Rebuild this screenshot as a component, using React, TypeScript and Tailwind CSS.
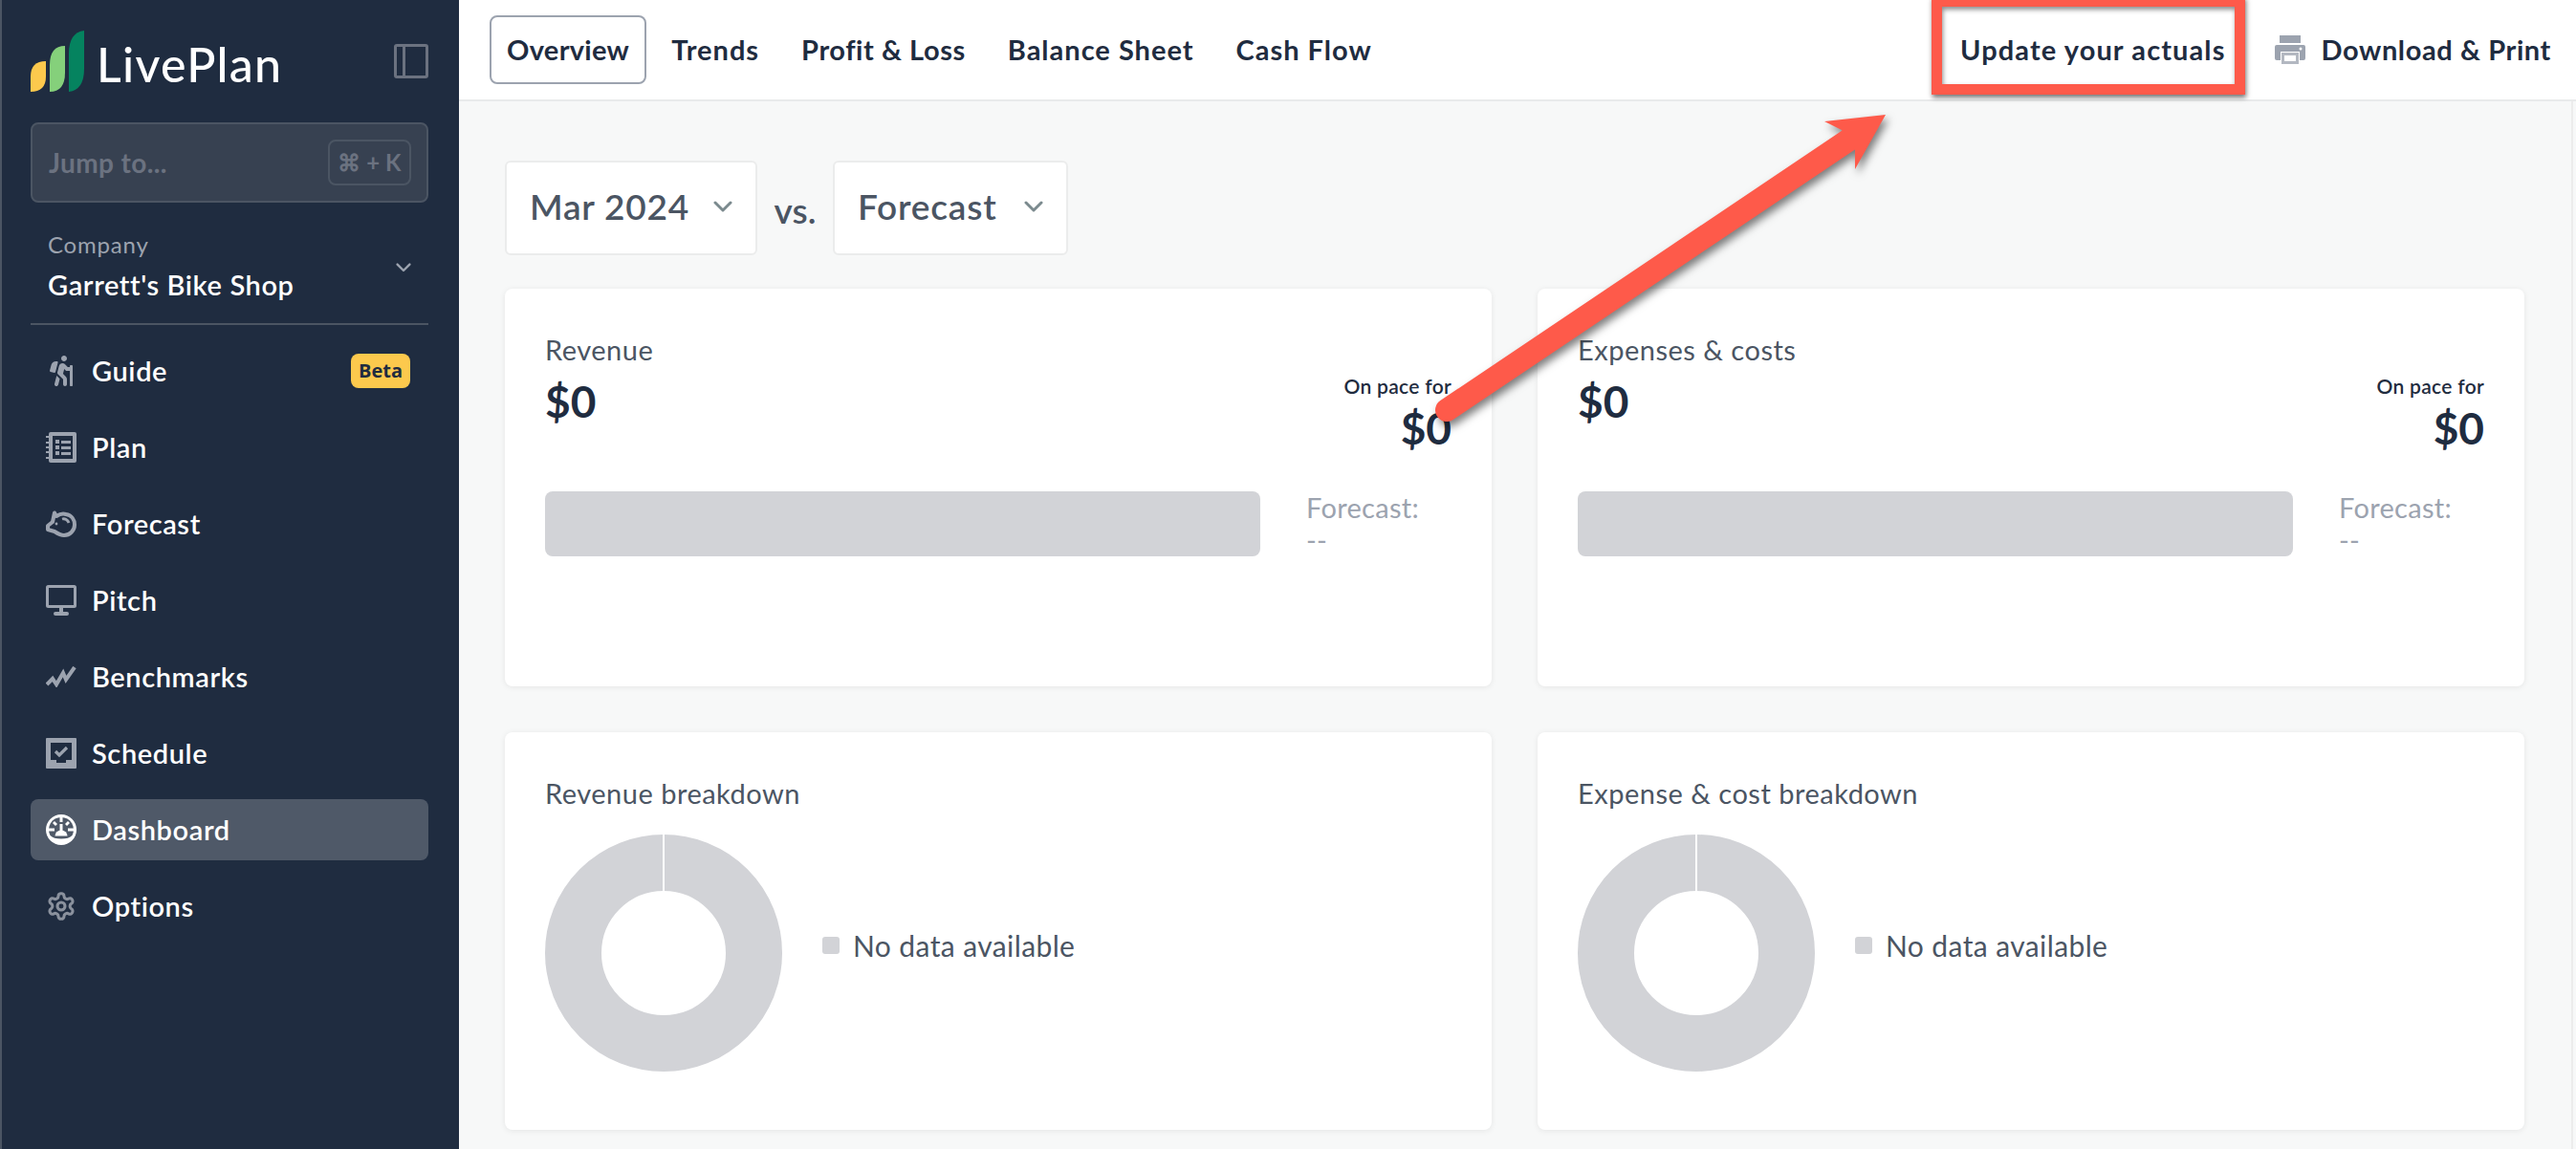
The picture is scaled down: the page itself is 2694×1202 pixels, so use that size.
import React from "react";
import { FaHiking } from "react-icons/fa";

const Logo = () => (
  <svg width="56" height="64" viewBox="32 32 56 64" className="shrink-0">
    <path d="M32 96V80Q32 64 48 64V80Q48 96 32 96Z" fill="#fcc94d" />
    <path d="M52 96V68Q52 48 68 48V76Q68 96 52 96Z" fill="#85d07b" />
    <path d="M72 96V56Q72 34 88 32V72Q88 94 72 96Z" fill="#05835f" />
  </svg>
);

const c = "#9ca3af";
const Printer = () => (
  <svg width="32" height="30" viewBox="0 0 32 30" className="shrink-0">
    <path d="M5 0h22v8H5z" fill={c} />
    <path d="M2 10h28a2 2 0 0 1 2 2v12a2 2 0 0 1-2 2h-4v-9H6v9H2a2 2 0 0 1-2-2V12a2 2 0 0 1 2-2z" fill={c} />
    <path d="M7 18h18v12H7zM10 21v6h12v-6z" fill="#b3b8c1" fillRule="evenodd" />
    <circle cx="27" cy="14" r="1.500" fill="#fff" />
  </svg>
);
const Notebook = () => (
  <svg width="32" height="32" viewBox="0 0 32 32" fill="none">
    <rect x="3" y="0" width="29" height="32" rx="2" fill={c} />
    <rect x="7" y="4" width="21" height="24" fill="#1f2c40" />
    <path d="M0 4h4v2H0zM0 10h4v2H0zM0 15h4v2H0zM0 20h4v2H0zM0 26h4v2H0z" fill={c} />
    <path d="M10 8h4v4h-4zM10 14h4v4h-4zM10 20h4v4h-4zM16 9h10v3H16zM16 15h10v3H16zM16 21h10v3H16z" fill={c} />
  </svg>
);
const Pig = () => (
  <svg width="32" height="28" viewBox="0 0 32 28" fill="none" stroke={c} strokeWidth="4" strokeLinejoin="round">
    <path d="M9 2.500l2 3.500c3-2 7-3 10-2 6 1 9 6 9 11 0 6-5 11-11 11-4 0-7-2-10-4l-7-2v-4l5-4z" />
    <path d="M17 9c3-1 6 1 7 4" strokeWidth="2.800" />
    <circle cx="11" cy="14" r="1.400" fill={c} stroke="none" />
  </svg>
);
const Monitor = () => (
  <svg width="32" height="32" viewBox="0 0 32 32" fill="none">
    <rect x="1.500" y="1.500" width="29" height="21" rx="1" stroke={c} strokeWidth="3" />
    <path d="M14 23h4v5h-4z" fill={c} />
    <rect x="8" y="28" width="16" height="4" rx="2" fill={c} />
  </svg>
);
const Zigzag = () => (
  <svg width="32" height="22" viewBox="0 0 32 22" fill="none" stroke={c} strokeWidth="4" strokeLinejoin="miter">
    <path d="M1 19l6-6 4 6 7-12 3 7 9-13" />
  </svg>
);
const Inbox = () => (
  <svg width="32" height="32" viewBox="0 0 32 32" fill="none">
    <path fillRule="evenodd" clipRule="evenodd" d="M1 0h30a1 1 0 0 1 1 1v30a1 1 0 0 1-1 1H1a1 1 0 0 1-1-1V1a1 1 0 0 1 1-1zM5 5v18h6v3h10v-3h6V5z" fill={c} />
    <path d="M10 14l4 4 8-8" stroke={c} strokeWidth="3.200" fill="none" />
  </svg>
);
const Gauge = () => (
  <svg width="32" height="32" viewBox="0 0 32 32">
    <circle cx="16" cy="16" r="16" fill="#fff" />
    <path d="M4.500 22A13 13 0 1 1 27.500 22Q24 25.500 16 25.500T4.500 22Z" fill="#4f5968" />
    <path d="M14.500 3h3v5h-3zM3 14.500h6v3H3zM23 14.500h6v3h-6zM7 9l2-2 3 3-2 2zM25 9l-2-2-3 3 2 2z" fill="#fff" />
    <path d="M14.500 10h3v7h-3z" fill="#fff" />
    <path d="M9.500 22.500a6.500 6 0 0 1 13 0z" fill="#fff" />
  </svg>
);
const Gear = () => (
  <svg width="32" height="32" viewBox="0 0 24 24" fill="none" stroke="#8a919d" strokeWidth="2.300" strokeLinecap="round" strokeLinejoin="round">
    <path d="M12.220 2h-.440a2 2 0 0 0-2 2v.180a2 2 0 0 1-1 1.730l-.430.250a2 2 0 0 1-2 0l-.150-.080a2 2 0 0 0-2.730.730l-.220.380a2 2 0 0 0 .730 2.730l.150.100a2 2 0 0 1 1 1.720v.510a2 2 0 0 1-1 1.740l-.150.090a2 2 0 0 0-.730 2.730l.220.380a2 2 0 0 0 2.730.730l.150-.080a2 2 0 0 1 2 0l.430.250a2 2 0 0 1 1 1.730V20a2 2 0 0 0 2 2h.440a2 2 0 0 0 2-2v-.180a2 2 0 0 1 1-1.730l.430-.250a2 2 0 0 1 2 0l.150.080a2 2 0 0 0 2.730-.730l.220-.390a2 2 0 0 0-.730-2.730l-.150-.080a2 2 0 0 1-1-1.740v-.500a2 2 0 0 1 1-1.740l.150-.090a2 2 0 0 0 .730-2.730l-.220-.380a2 2 0 0 0-2.730-.730l-.150.080a2 2 0 0 1-2 0l-.430-.250a2 2 0 0 1-1-1.730V4a2 2 0 0 0-2-2z" />
    <circle cx="12" cy="12" r="3" />
  </svg>
);
const Chevron = ({ w, color, sw }: { w: number; color: string; sw: number }) => (
  <svg width={w} height={w * 0.6} viewBox="0 0 20 12" fill="none" stroke={color} strokeWidth={sw} strokeLinecap="round" strokeLinejoin="round">
    <path d="M2 2l8 8 8-8" />
  </svg>
);

const nav: { label: string; icon: React.ReactNode; active?: boolean; badge?: boolean }[] = [
  { label: "Guide", icon: <FaHiking size={32} color="#9ca3af" />, badge: true },
  { label: "Plan", icon: <Notebook /> },
  { label: "Forecast", icon: <Pig /> },
  { label: "Pitch", icon: <Monitor /> },
  { label: "Benchmarks", icon: <Zigzag /> },
  { label: "Schedule", icon: <Inbox /> },
  { label: "Dashboard", icon: <Gauge />, active: true },
  { label: "Options", icon: <Gear /> },
];

const Sidebar = () => (
  <aside className="w-[480px] shrink-0 h-full bg-[#1f2c40] border-l-2 border-[#4b5563] pl-[30px] pr-[32px] pt-[32px] flex flex-col">
    <div className="h-[64px] flex items-center justify-between">
      <div className="flex items-center gap-[13px]">
        <Logo />
        <span className="text-[50px] leading-none font-medium text-white tracking-[1.3px] pt-[6px]">LivePlan</span>
      </div>
      <div className="w-[36px] h-[36px] border-[3px] border-[#6b7280] rounded-[3px] flex -mt-[1px]">
        <div className="w-[9px] border-r-[3px] border-[#6b7280]" />
      </div>
    </div>
    <div className="mt-[32px] h-[84px] bg-[#374151] border-2 border-[#4b5563] rounded-[8px] pl-[17px] pr-[16px] flex items-center justify-between">
      <span className="text-[28px] font-bold text-[#6b7280] tracking-[0.4px]">Jump to...</span>
      <span className="w-[87px] h-[48px] border-2 border-[#4b5563] rounded-[8px] flex items-center justify-center text-[24px] font-bold text-[#6b7280] whitespace-pre">⌘ + K</span>
    </div>
    <div className="mt-[28px] h-[100px] border-b-2 border-[#4b5563] pl-[18px] pr-[18px] flex items-start justify-between">
      <div className="flex flex-col">
        <span className="text-[24px] leading-[32px] text-[#9ca3af] tracking-[0.8px]">Company</span>
        <span className="text-[29px] leading-[36px] mt-[8px] font-semibold text-white tracking-[0.6px]">Garrett's Bike Shop</span>
      </div>
      <div className="mt-[35px]"><Chevron w={16} color="#9ca3af" sw={3} /></div>
    </div>
    <nav className="mt-[16px] flex flex-col gap-[16px]">
      {nav.map((n) => (
        <div key={n.label} className={`h-[64px] rounded-[8px] pl-[16px] pr-[19px] flex items-center ${n.active ? "bg-[#4f5968]" : ""}`}>
          <span className="w-[32px] h-[32px] flex items-center justify-center shrink-0">{n.icon}</span>
          <span className="ml-[16px] text-[29px] font-semibold text-white tracking-[0.6px]">{n.label}</span>
          {n.badge && (
            <span className="ml-auto w-[62px] h-[36px] rounded-[8px] bg-[#fcc94d] flex items-center justify-center text-[20px] font-bold text-[#1f2c40] font-['Open_Sans',sans-serif]">Beta</span>
          )}
        </div>
      ))}
    </nav>
  </aside>
);

const tabCls = "text-[29px] font-bold text-[#1f2c40] whitespace-nowrap";

const TopBar = () => (
  <header className="h-[106px] shrink-0 bg-white border-b-2 border-[#e9eaeb] pl-[32px] pr-[26px] flex items-center">
    <div className="flex items-center gap-[8px]">
      <span className={`${tabCls} tracking-[0.3px] h-[72px] flex items-center px-[16px] border-2 border-[#9ca3af] rounded-[8px]`}>Overview</span>
      <span className={`${tabCls} tracking-[1px] px-[18px]`}>Trends</span>
      <span className={`${tabCls} tracking-[0.55px] px-[18px]`}>Profit &amp; Loss</span>
      <span className={`${tabCls} tracking-[1px] px-[18px]`}>Balance Sheet</span>
      <span className={`${tabCls} tracking-[1px] px-[18px]`}>Cash Flow</span>
    </div>
    <div className="ml-auto flex items-center">
      <span className={`${tabCls} tracking-[1.1px]`}>Update your actuals</span>
      <span className="ml-[51px] flex items-center gap-[17px]">
        <Printer />
        <span className={`${tabCls} tracking-[0.6px]`}>Download &amp; Print</span>
      </span>
    </div>
  </header>
);

const Select = ({ label, width }: { label: string; width: string }) => (
  <div className={`${width} h-[99px] bg-white border-2 border-[#ebecec] rounded-[6px] pl-[24px] pr-[24px] flex items-center justify-between pb-[4px]`}>
    <span className="text-[37px] font-semibold text-[#4b5563] tracking-[0.8px]">{label}</span>
    <Chevron w={20} color="#7b8a8e" sw={3} />
  </div>
);

const cardCls = "h-[416px] bg-white rounded-[8px] shadow-[0_1px_6px_rgba(0,0,0,0.08)] pt-[48px] px-[42px]";

const StatCard = ({ title }: { title: string }) => (
  <div className={cardCls}>
    <div className="h-[126px] flex justify-between">
      <div>
        <div className="text-[29px] leading-[32px] text-[#4b5563] tracking-[0.5px]">{title}</div>
        <div className="text-[46px] leading-[56px] mt-[10px] font-bold text-[#1f2c40]">$0</div>
      </div>
      <div className="pt-[40px] text-right">
        <div className="text-[21px] leading-[28px] font-semibold text-[#1f2c40] tracking-[0.3px]">On pace for</div>
        <div className="text-[46px] leading-[56px] mt-[2px] font-bold text-[#1f2c40]">$0</div>
      </div>
    </div>
    <div className="mt-[38px] flex gap-[48px]">
      <div className="w-[748px] h-[68px] bg-[#d2d3d7] rounded-[8px]" />
      <div className="text-[29px] leading-[34px] text-[#9ca3af] tracking-[0.3px]">
        <div>Forecast:</div>
        <div>--</div>
      </div>
    </div>
  </div>
);

const Donut = () => (
  <svg width="248" height="248" viewBox="0 0 248 248" className="shrink-0">
    <circle cx="124" cy="124" r="94.500" fill="none" stroke="#d2d3d7" strokeWidth="59" />
    <rect x="123" y="0" width="2" height="60" fill="#fff" />
  </svg>
);

const ChartCard = ({ title }: { title: string }) => (
  <div className={cardCls}>
    <div className="text-[29px] leading-[32px] text-[#4b5563] tracking-[0.5px]">{title}</div>
    <div className="mt-[27px] flex items-center gap-[42px]">
      <Donut />
      <div className="flex items-center gap-[14px] mb-[16px]">
        <span className="w-[18px] h-[18px] rounded-[3px] bg-[#d2d3d7]" />
        <span className="text-[30px] text-[#4b5563] tracking-[0.4px]">No data available</span>
      </div>
    </div>
  </div>
);

export default function App() {
  return (
    <div className="relative w-[2694px] h-[1202px] overflow-hidden flex font-['Lato','Noto_Sans',sans-serif]">
      <Sidebar />
      <div className="flex-1 min-w-0 flex flex-col bg-[#f7f8f8]">
        <TopBar />
        <main className="flex-1 border-r-2 border-[#ececec] mr-[3px] pl-[48px] pr-[49px] pt-[62px]">
          <div className="flex items-center">
            <Select label="Mar 2024" width="w-[264px]" />
            <span className="w-[79px] text-center text-[37px] font-semibold text-[#4b5563] pt-[4px]">vs.</span>
            <Select label="Forecast" width="w-[246px]" />
          </div>
          <div className="mt-[35px] grid grid-cols-2 gap-x-[48px] gap-y-[48px]">
            <StatCard title="Revenue" />
            <StatCard title="Expenses & costs" />
            <ChartCard title="Revenue breakdown" />
            <ChartCard title="Expense & cost breakdown" />
          </div>
        </main>
      </div>
      <div className="absolute left-[2020px] -top-[4px] w-[328px] h-[103px] border-[11px] border-[#fe5a4a] shadow-[1px_3px_5px_rgba(0,0,0,0.55),inset_1px_3px_5px_rgba(0,0,0,0.45)]" />
      <svg className="absolute left-0 top-0 [filter:drop-shadow(3px_5px_4px_rgba(0,0,0,0.5))]" width="2694" height="1202" fill="none">
        <path d="M1513 429L1934 146" stroke="#fe5a4a" strokeWidth="24" strokeLinecap="round" />
        <path d="M1972 120L1908 127L1926 136L1940 154L1940 177Z" fill="#fe5a4a" />
      </svg>
    </div>
  );
}
